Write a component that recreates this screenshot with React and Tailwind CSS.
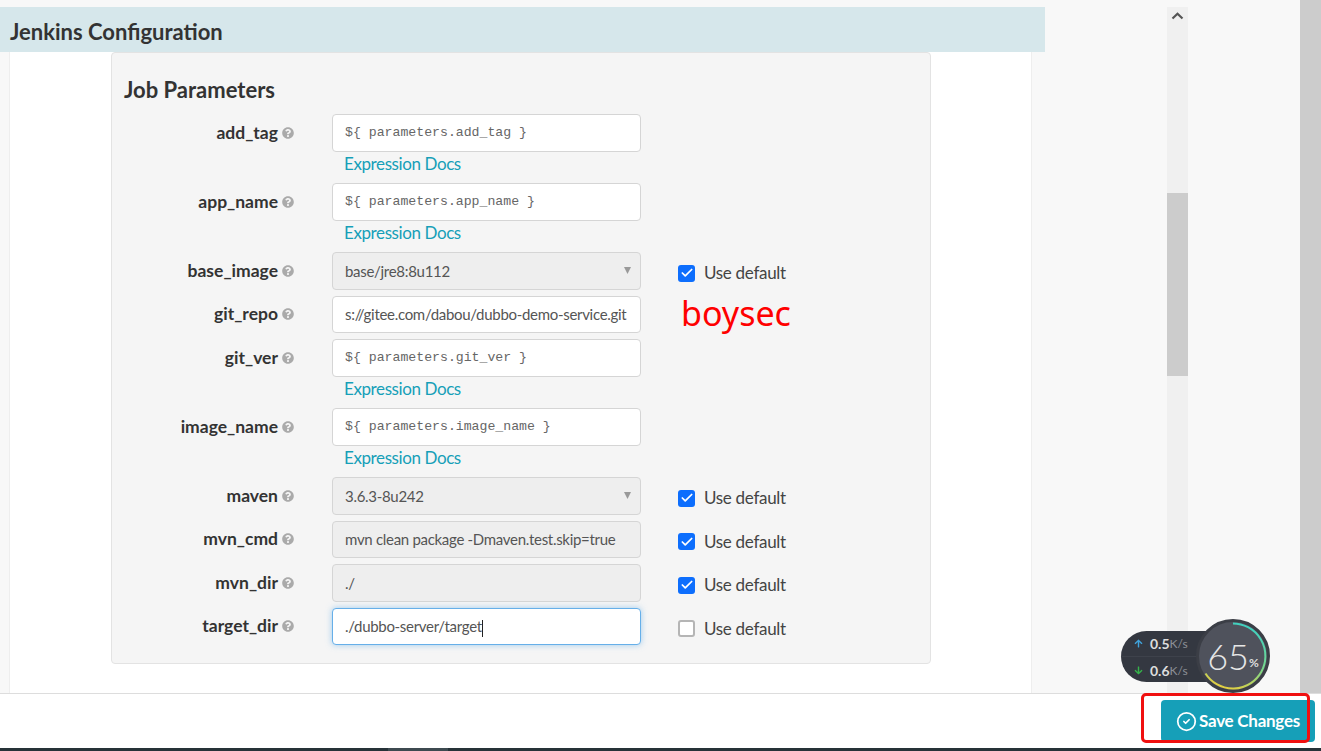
import React from "react";
import { Check, CircleCheck } from "lucide-react";
import { FaQuestionCircle, FaArrowUp, FaArrowDown } from "react-icons/fa";

const params = [
  { name: "add_tag", value: "${ parameters.add_tag }", mono: true, docs: true },
  { name: "app_name", value: "${ parameters.app_name }", mono: true, docs: true },
  { name: "base_image", value: "base/jre8:8u112", select: true, disabled: true, def: true },
  { name: "git_repo", value: "s://gitee.com/dabou/dubbo-demo-service.git", note: "boysec" },
  { name: "git_ver", value: "${ parameters.git_ver }", mono: true, docs: true },
  { name: "image_name", value: "${ parameters.image_name }", mono: true, docs: true },
  { name: "maven", value: "3.6.3-8u242", select: true, disabled: true, def: true },
  { name: "mvn_cmd", value: "mvn clean package -Dmaven.test.skip=true", disabled: true, def: true },
  { name: "mvn_dir", value: "./", disabled: true, def: true },
  { name: "target_dir", value: "./dubbo-server/target", focused: true, def: false },
];

const UseDefault = ({ checked }) => (
  <div className="flex items-center ml-[37px] mt-[2px] h-[38px]">
    {checked ? (
      <div className="w-[17px] h-[17px] rounded-[3px] bg-[#0d6efd] flex items-center justify-center">
        <Check size={14} strokeWidth={3} className="text-white" />
      </div>
    ) : (
      <div className="w-[17px] h-[17px] rounded-[3px] bg-white border-2 border-[#b5b5b5]" />
    )}
    <span className="ml-[9px] text-[17px] tracking-[-0.3px] text-[#444]">Use default</span>
  </div>
);

const Field = ({ p }) => {
  let cls = "bg-white border-[#d5d5d5]";
  if (p.disabled) cls = "bg-[#eeeeee] border-[#d5d5d5]";
  if (p.focused) cls = "bg-white border-[#66afe9] shadow-[0_0_6px_rgba(102,175,233,0.6)]";
  return (
    <div className={`w-[309px] h-[37.5px] border rounded-[4px] pl-[12px] pr-[9px] flex items-center justify-between overflow-hidden whitespace-nowrap ${cls}`}>
      {p.mono ? (
        <span className="text-[13.2px] text-[#666] pt-[1px] font-['Liberation_Mono',monospace]">{p.value}</span>
      ) : (
        <span className="text-[15px] tracking-[-0.3px] text-[#555]">
          {p.value}
          {p.focused && <span className="inline-block w-px h-[17px] bg-[#222] align-middle" />}
        </span>
      )}
      {p.select && (
        <svg width="7" height="7" viewBox="0 0 7 7" className="shrink-0">
          <polygon points="0,0 7,0 3.5,7" fill="#999" />
        </svg>
      )}
    </div>
  );
};

const ParamRow = ({ p }) => (
  <div className={p.docs ? "h-[69px]" : "h-[43.5px]"}>
    <div className="flex items-start">
      <div className="w-[170px] h-[37.5px] flex items-center justify-end">
        <span className="text-[17.5px] font-bold text-[#333]">{p.name}</span>
        <FaQuestionCircle size={12} className="ml-[4px] text-[#aaaaaa]" />
      </div>
      <div className="ml-[38px]">
        <Field p={p} />
        {p.docs && (
          <div className="pl-[12px] h-[25px] text-[17px] tracking-[-0.4px] text-[#169fb8] leading-[24px]">Expression Docs</div>
        )}
      </div>
      {p.def !== undefined && <UseDefault checked={p.def} />}
      {p.note && (
        <span className="ml-[40px] -mt-[1px] text-[34px] leading-[36px] text-[#ff0000] font-['Noto_Sans',sans-serif]">{p.note}</span>
      )}
    </div>
  </div>
);

const NetSpeed = () => (
  <div className="absolute left-[1121px] top-[619px] w-[149px] h-[74px]">
    <div className="absolute left-0 top-[12px] w-[100px] h-[51px] rounded-l-[26px] bg-[#343841] text-white">
      <div className="flex items-center h-[26px] pl-[13px] border-b border-[#3e424b]">
        <FaArrowUp size={9} className="text-[#3fa3dc]" />
        <span className="ml-[7px] text-[14px] font-bold text-[#ddd]">0.5</span>
        <span className="text-[12px] text-[#8d9097]">K/s</span>
      </div>
      <div className="flex items-center h-[25px] pl-[13px] pt-[2px]">
        <FaArrowDown size={9} className="text-[#35b34a]" />
        <span className="ml-[7px] text-[14px] font-bold text-[#ddd]">0.6</span>
        <span className="text-[12px] text-[#8d9097]">K/s</span>
      </div>
    </div>
    <div className="absolute left-[75px] top-0 w-[74px] h-[74px] rounded-full bg-[#4f525c] border-[3px] border-[#3b3e46] flex items-center justify-center">
      <span className="text-[36px] font-light leading-none text-[#e6e6e6]">65</span>
      <span className="text-[12px] font-bold text-[#ddd] mt-[14px]">%</span>
    </div>
    <svg width="74" height="74" viewBox="0 0 74 74" className="absolute left-[75px] top-0" fill="none" strokeWidth="2">
      <defs>
        <linearGradient id="ring" x1="0.6" y1="0" x2="0.3" y2="1">
          <stop offset="0" stopColor="#3fd0c0" />
          <stop offset="0.55" stopColor="#7bd88a" />
          <stop offset="1" stopColor="#e6cf3f" />
        </linearGradient>
      </defs>
      <path d="M37 4.5 A32.5 32.5 0 1 1 9.5 54.5" stroke="url(#ring)" />
    </svg>
  </div>
);

export default function App() {
  return (
    <div className="relative h-[751px] overflow-hidden bg-[#f8f8f8] font-['Lato',sans-serif]">
      <div className="flex h-[693px]">
        <div className="w-[1045px] pt-[7px] flex flex-col shrink-0">
          <div className="h-[45px] bg-[#d6e7eb] pl-[10px] pt-[4px] flex items-center">
            <h2 className="text-[22px] font-bold text-[#333]">Jenkins Configuration</h2>
          </div>
          <div className="flex-1 ml-[9px] w-[1023px] bg-white border-x border-[#eeeeee] pl-[101px]">
            <div className="w-[820px] h-[612px] bg-[#f5f5f5] border border-[#e3e3e3] rounded-[4px] pl-[12px] pt-[24px]">
              <h3 className="text-[22px] font-bold leading-[26px] text-[#333] mb-[11px]">Job Parameters</h3>
              <div>
                {params.map((p) => (
                  <ParamRow key={p.name} p={p} />
                ))}
              </div>
            </div>
          </div>
        </div>

        {/* inner scrollbar */}
        <div className="ml-[122px] mt-[7px] w-[21px] bg-[#f0f0f0] flex flex-col items-center shrink-0">
          <svg width="13" height="8" viewBox="0 0 13 8" fill="none" className="mt-[5px]">
            <polyline points="1.5,6.5 6.5,1.8 11.5,6.5" stroke="#555" strokeWidth="2.2" />
          </svg>
          <div className="w-full h-[183px] bg-[#cccccc] mt-[173px]" />
        </div>
        <div className="flex-1" />
        <div className="w-[21px] bg-[#cccccc] shrink-0" />
      </div>

      {/* footer */}
      <div className="h-[55px] bg-white border-t border-[#dddddd] flex justify-end pt-[6px] pr-[6px]">
        <button className="w-[154px] h-[42px] rounded-[4px] bg-[#169fb8] text-white text-[17px] tracking-[-0.25px] font-bold flex items-center justify-center gap-[2px]">
          <CircleCheck size={21} />
          Save Changes
        </button>
      </div>
      <div className="h-[3px] bg-[#263238] flex">
        <div className="ml-[388px] w-[60px] bg-[#3d4a50]" />
      </div>

      <NetSpeed />
      {/* red annotation box */}
      <div className="absolute left-[1141px] top-[693px] w-[169px] h-[50px] border-[3px] border-[#f01010] rounded-[5px]" />
    </div>
  );
}
